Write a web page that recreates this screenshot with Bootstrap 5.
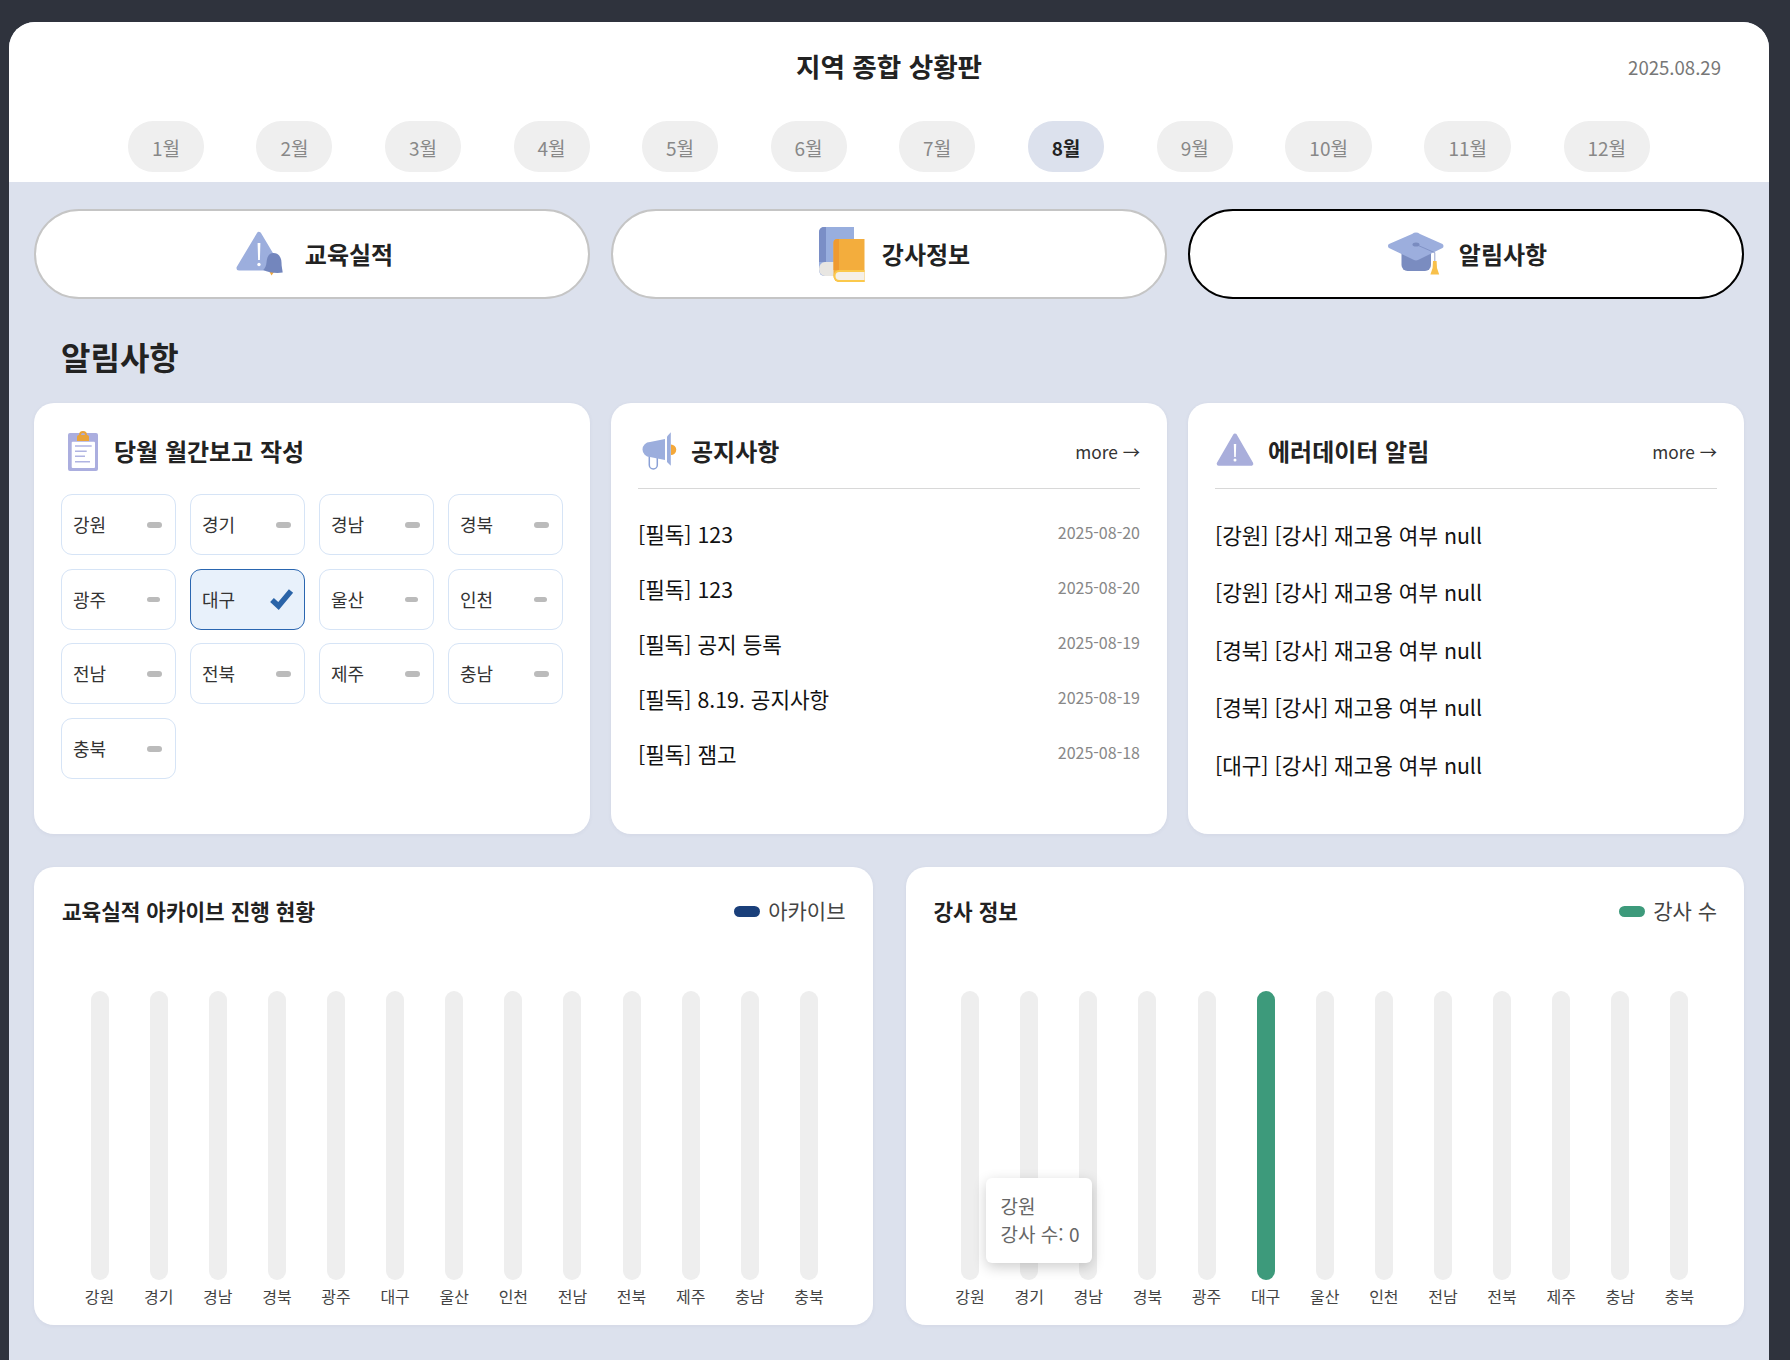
<!DOCTYPE html>
<html lang="ko">
<head>
    <meta charset="UTF-8">
    <meta name="viewport" content="width=device-width, initial-scale=1.0">
    <title>지역 종합 상황판</title>
    <link href="https://cdn.jsdelivr.net/npm/bootstrap@5.3.0/dist/css/bootstrap.min.css" rel="stylesheet">
    <style>
        body {
            font-family: "Noto Sans CJK KR", "Noto Sans", sans-serif;
            background: #2f333d;
            color: #222;
            min-height: 1360px;
        }
        .panel {
            margin: 22px 21px 0 9px;
            min-height: 1338px;
            background: #dce1ed;
            border-radius: 26px 26px 0 0;
            overflow: hidden;
        }

        /* header */
        .top-head { background: #fff; height: 160px; }
        .title-row {
            display: grid;
            grid-template-columns: 1fr auto 1fr;
            align-items: center;
            height: 88px;
            padding: 0 48px;
        }
        .page-title { font-size: 26.6px; font-weight: 700; margin: 0; color: #222; }
        .page-date { font-size: 18.6px; color: #777; text-align: right; padding-top: 2px; }
        .month-row { margin-top: 11px; gap: 52.5px; }
        .month-pill {
            height: 51px;
            padding: 2px 24px 0;
            border: 0;
            border-radius: 25px;
            background: #efefef;
            color: #888;
            font-size: 19px;
            line-height: 1;
        }
        .month-pill.on { background: #dce1ed; color: #222; font-weight: 700; }

        /* body */
        .dash-body { padding: 27px 25px 0; }
        .gut-tabs { --bs-gutter-x: 21px; --bs-gutter-y: 0; }
        .gut-lower { --bs-gutter-x: 33px; --bs-gutter-y: 0; margin-top: 33px; }
        .tab-pill {
            height: 90px;
            width: 100%;
            display: flex;
            align-items: center;
            justify-content: center;
            gap: 14px;
            background: #fff;
            border: 2px solid #c5c5c5;
            border-radius: 45px;
            font-size: 24px;
            font-weight: 700;
            color: #222;
        }
        .tab-pill:hover { background: #fff; border-color: #c5c5c5; color: #222; }
        .tab-pill.on, .tab-pill.on:hover { border-color: #000; }
        .section-title {
            font-size: 32px;
            font-weight: 700;
            line-height: 44px;
            margin: 35px 0 25px 27px;
            color: #222;
        }
        .dash-card {
            border: 0;
            border-radius: 20px;
            background: #fff;
            box-shadow: 0 1px 4px rgba(60, 70, 100, .06);
        }
        .notice-card { height: 431px; padding: 26px 27px 0; }
        .card-head { height: 44px; gap: 9px; }
        .card-head h3 { font-size: 24px; font-weight: 700; margin: 0; color: #222; }
        .more-link { font-size: 17.3px; color: #333; text-decoration: none; padding-top: 2px; }
        .head-line { border-bottom: 1px solid #d8d8d8; height: 60px; }

        /* region buttons */
        .region-grid {
            display: grid;
            grid-template-columns: repeat(4, 1fr);
            grid-auto-rows: 61px;
            column-gap: 14px;
            row-gap: 13.7px;
            margin-top: 21px;
        }
        .region-btn {
            display: flex;
            align-items: center;
            justify-content: space-between;
            padding: 0 13px 0 11px;
            border: 1px solid #d6e4f6;
            border-radius: 11px;
            background: #fff;
            font-size: 18px;
            color: #333;
        }
        .region-btn.on { background: #e8f1fb; border-color: #2a66b0; padding-right: 10px; }
        .dash-mark { width: 15px; height: 6px; border-radius: 3px; background: #bbb; }
        .dash-mark.thin { width: 13px; height: 5px; margin-right: 2px; }

        /* lists */
        .notice-list { margin-top: 17px; }
        .notice-list .list-group-item {
            height: 55px;
            padding: 0;
            border: 0;
            font-size: 21.3px;
            color: #111;
        }
        .notice-list .item-date { font-size: 16px; color: #888; padding-bottom: 3px; }
        .error-list .list-group-item { height: 57.5px; }

        /* charts */
        .chart-card { padding: 27px 27px 19px; }
        .chart-head { height: 34px; }
        .chart-head h4 { font-size: 21.3px; font-weight: 700; margin: 0; padding-left: 1px; color: #222; }
        .legend-key { gap: 8px; font-size: 21px; color: #444; }
        .legend-swatch { width: 26px; height: 11px; border-radius: 6px; }
        .bg-archive { background: #1a3f7a; }
        .bg-teacher { background: #3d9a7b; }
        .plot {
            position: relative;
            display: grid;
            grid-template-columns: repeat(13, 1fr);
            margin: 63px 8px 0;
        }
        .plot-shift { margin-left: 9px; margin-right: 7px; }
        .plot-col { display: flex; flex-direction: column; align-items: center; }
        .plot-bar { width: 18px; height: 289px; border-radius: 9px; background: #eee; }
        .plot-bar.full { background: #3d9a7b; }
        .plot-label { margin-top: 6px; font-size: 16px; line-height: 20px; color: #444; }
        .plot-tip {
            position: absolute;
            left: 45px;
            top: 187px;
            width: 106px;
            height: 85px;
            padding: 14px 0 0 15px;
            border-radius: 6px;
            background: #fff;
            box-shadow: 0 4px 14px rgba(0, 0, 0, .2);
            font-size: 19px;
            line-height: 28px;
            color: #666;
        }
    </style>
</head>
<body>
<div class="panel">
    <div class="top-head">
        <div class="title-row">
            <div></div>
            <h1 class="page-title">지역 종합 상황판</h1>
            <div class="page-date">2025.08.29</div>
        </div>
        <div class="month-row d-flex justify-content-center" id="months"></div>
    </div>

    <div class="dash-body">
        <div class="row gut-tabs">
            <div class="col-4">
                <button class="btn tab-pill">
                    <svg width="60" height="60" viewBox="0 0 60 60">
                        <path d="M28 10.500 L48 44 H8 Z" fill="#9caedd" stroke="#9caedd" stroke-width="5" stroke-linejoin="round"/>
                        <path d="M26.600 19 h2.800 l-.5 17 h-1.800 Z" fill="#fff"/>
                        <circle cx="28" cy="40.500" r="1.700" fill="#fff"/>
                        <path d="M38 47 l5 1 l-2.500 3.500 Z" fill="#f2a93b"/>
                        <path d="M42.500 29 c5.500 0 8 5 8 9.500 c0 4 .8 6.500 1.200 10 c-6.500 1-14 0-19.500-2.500 c2-2 3-4 3.300-7.500 c.4-5 2-9.500 7-9.500 Z" fill="#7386bd"/>
                    </svg>
                    <span>교육실적</span>
                </button>
            </div>
            <div class="col-4">
                <button class="btn tab-pill">
                    <svg width="60" height="60" viewBox="0 0 60 60">
                        <path d="M16 3 H46 V52 H16 a5 6 0 0 1 -5 -6 V8 a5 5 0 0 1 5 -5 Z" fill="#98aede"/>
                        <path d="M16 3 H18 V38 H11 V8 a5 5 0 0 1 5 -5 Z" fill="#7a8ec6"/>
                        <path d="M17 38 H30 V52 H17 a6 7 0 0 1 0 -14 Z" fill="#e8e6e2"/>
                        <path d="M30 15 H56.500 V58 H31 a5.500 6 0 0 1 -5.500 -6 V19 a4 4 0 0 1 4 -4 Z" fill="#f3ad3d"/>
                        <path d="M29.500 15 H31 V46 H25.500 V19 a4 4 0 0 1 4 -4 Z" fill="#ef9a30"/>
                        <path d="M56.500 46 H31 a5.500 6 0 0 0 0 12 H56.500 Z" fill="#fbc94c"/>
                        <path d="M56.500 48 H31.500 a4 4 0 0 0 0 8 H56.500 Z" fill="#f5f0e8"/>
                    </svg>
                    <span>강사정보</span>
                </button>
            </div>
            <div class="col-4">
                <button class="btn tab-pill on">
                    <svg width="60" height="60" viewBox="0 0 60 60">
                        <path d="M16.500 26 H46 V41 a6 6 0 0 1 -6 6 H22.500 a6 6 0 0 1 -6 -6 Z" fill="#7a8cc0"/>
                        <path d="M27 10 a7 7 0 0 1 8 0 L57.500 20 a2.500 2.500 0 0 1 0 4 L35 35 a7 7 0 0 1 -8 0 L4 24 a2.500 2.500 0 0 1 0 -4 Z" fill="#9caedd"/>
                        <ellipse cx="31" cy="20.500" rx="3.500" ry="2" fill="#7a8cc0"/>
                        <path d="M31 20.500 L49.800 28.700 V38" fill="none" stroke="#7a8cc0" stroke-width=".8"/>
                        <path d="M48 37 h3.600 l.4 7 l2.200 6.500 h-8.800 l2.200-6.500 Z" fill="#f8c04a"/>
                    </svg>
                    <span>알림사항</span>
                </button>
            </div>
        </div>

        <h2 class="section-title">알림사항</h2>

        <div class="row gut-tabs">
            <div class="col-4">
                <div class="card dash-card notice-card">
                    <div class="card-head d-flex align-items-center">
                        <svg width="44" height="44" viewBox="0 0 44 44">
                            <rect x="7" y="4" width="30" height="38" rx="2" fill="#abaedf"/>
                            <rect x="10.700" y="12.700" width="23.300" height="26.300" rx="1" fill="#fff"/>
                            <path d="M14 17 H30.700 M14 22.300 H25.700 M14 27.300 H24 M14 32.700 H29" stroke="#b0b4e2" stroke-width="1.500"/>
                            <circle cx="22" cy="6" r="3" fill="none" stroke="#e9a339" stroke-width="2"/>
                            <path d="M16 8 a2 2 0 0 1 2 -2 H26 a2 2 0 0 1 2 2 V12 H16 Z" fill="#e9a339"/>
                        </svg>
                        <h3>당월 월간보고 작성</h3>
                    </div>
                    <div class="region-grid" id="regions"></div>
                </div>
            </div>
            <div class="col-4">
                <div class="card dash-card notice-card">
                    <div class="head-line">
                        <div class="card-head d-flex align-items-center">
                            <svg width="44" height="44" viewBox="0 0 44 44">
                                <path d="M11.300 25 V36 a4 4 0 0 0 8 0 V27" fill="none" stroke="#8aa0d6" stroke-width="1.500"/>
                                <path d="M33 15.500 a5 5 0 0 1 0 10.500 Z" fill="#f4a83a"/>
                                <path d="M12 13 L27 10 V31 L12 28 a7.500 7.500 0 0 1 0 -15 Z" fill="#9caedd"/>
                                <path d="M29 7.500 L32.800 3.300 V36.700 L29 33 Z" fill="#9caedd"/>
                            </svg>
                            <h3 class="flex-grow-1">공지사항</h3>
                            <a href="#" class="more-link">more →</a>
                        </div>
                    </div>
                    <ul class="list-group list-group-flush notice-list">
                        <li class="list-group-item d-flex justify-content-between align-items-center"><span>[필독] 123</span><span class="item-date">2025-08-20</span></li>
                        <li class="list-group-item d-flex justify-content-between align-items-center"><span>[필독] 123</span><span class="item-date">2025-08-20</span></li>
                        <li class="list-group-item d-flex justify-content-between align-items-center"><span>[필독] 공지 등록</span><span class="item-date">2025-08-19</span></li>
                        <li class="list-group-item d-flex justify-content-between align-items-center"><span>[필독] 8.19. 공지사항</span><span class="item-date">2025-08-19</span></li>
                        <li class="list-group-item d-flex justify-content-between align-items-center"><span>[필독] 잼고</span><span class="item-date">2025-08-18</span></li>
                    </ul>
                </div>
            </div>
            <div class="col-4">
                <div class="card dash-card notice-card">
                    <div class="head-line">
                        <div class="card-head d-flex align-items-center">
                            <svg width="44" height="44" viewBox="0 0 44 44">
                                <path d="M20 6.500 L36.300 34.700 H3.700 Z" fill="#a9aedb" stroke="#a9aedb" stroke-width="4" stroke-linejoin="round"/>
                                <path d="M18.800 15 h2.400 l-.4 13 h-1.600 Z" fill="#fff"/>
                                <circle cx="20" cy="31" r="1.500" fill="#fff"/>
                            </svg>
                            <h3 class="flex-grow-1">에러데이터 알림</h3>
                            <a href="#" class="more-link">more →</a>
                        </div>
                    </div>
                    <ul class="list-group list-group-flush notice-list error-list">
                        <li class="list-group-item d-flex align-items-center">[강원] [강사] 재고용 여부 null</li>
                        <li class="list-group-item d-flex align-items-center">[강원] [강사] 재고용 여부 null</li>
                        <li class="list-group-item d-flex align-items-center">[경북] [강사] 재고용 여부 null</li>
                        <li class="list-group-item d-flex align-items-center">[경북] [강사] 재고용 여부 null</li>
                        <li class="list-group-item d-flex align-items-center">[대구] [강사] 재고용 여부 null</li>
                    </ul>
                </div>
            </div>
        </div>

        <div class="row gut-lower">
            <div class="col-6">
                <div class="card dash-card chart-card">
                    <div class="chart-head d-flex justify-content-between align-items-center">
                        <h4>교육실적 아카이브 진행 현황</h4>
                        <div class="legend-key d-flex align-items-center"><span class="legend-swatch bg-archive"></span>아카이브</div>
                    </div>
                    <div class="plot plot-shift" id="plotArchive"></div>
                </div>
            </div>
            <div class="col-6">
                <div class="card dash-card chart-card">
                    <div class="chart-head d-flex justify-content-between align-items-center">
                        <h4>강사 정보</h4>
                        <div class="legend-key d-flex align-items-center"><span class="legend-swatch bg-teacher"></span>강사 수</div>
                    </div>
                    <div class="plot" id="plotTeacher">
                        <div class="plot-tip">강원<br>강사 수: 0</div>
                    </div>
                </div>
            </div>
        </div>
    </div>
</div>

<script>
    const regionNames = ['강원', '경기', '경남', '경북', '광주', '대구', '울산', '인천', '전남', '전북', '제주', '충남', '충북'];

    // months
    let monthHtml = '';
    for (let m = 1; m <= 12; m++) {
        monthHtml += `<button class="btn month-pill${m === 8 ? ' on' : ''}">${m}월</button>`;
    }
    document.getElementById('months').innerHTML = monthHtml;

    // region buttons, 대구 is done
    const checkSvg = '<svg width="25" height="22" viewBox="0 0 25 22"><path d="M3 12 L9.500 18 L22 3" fill="none" stroke="#2a64a8" stroke-width="5.500"/></svg>';
    document.getElementById('regions').innerHTML = regionNames.map((name, i) => {
        const done = name === '대구';
        const thin = i >= 4 && i <= 7;
        const mark = done ? checkSvg : `<span class="dash-mark${thin ? ' thin' : ''}"></span>`;
        return `<div class="region-btn${done ? ' on' : ''}"><span>${name}</span>${mark}</div>`;
    }).join('');

    // bar charts
    function drawPlot(id, fullName) {
        const html = regionNames.map(name =>
            `<div class="plot-col"><div class="plot-bar${name === fullName ? ' full' : ''}"></div><div class="plot-label">${name}</div></div>`
        ).join('');
        document.getElementById(id).insertAdjacentHTML('afterbegin', html);
    }
    drawPlot('plotArchive', null);
    drawPlot('plotTeacher', '대구');
</script>
<script src="https://cdn.jsdelivr.net/npm/bootstrap@5.3.0/dist/js/bootstrap.bundle.min.js"></script>
</body>
</html>
